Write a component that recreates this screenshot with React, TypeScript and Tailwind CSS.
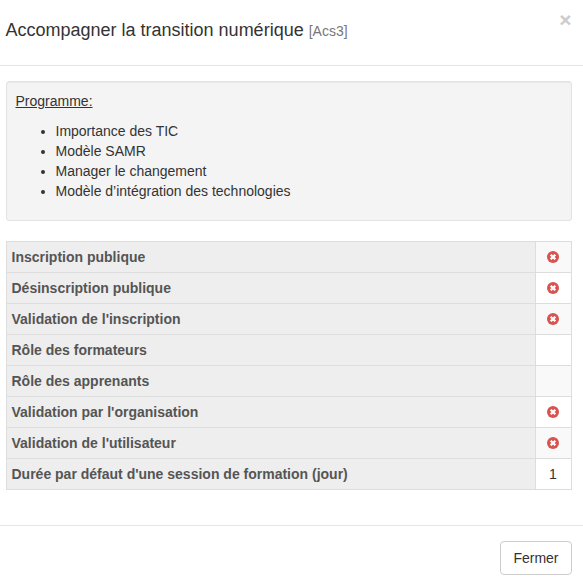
const rows: { label: string; value: 'no' | '' | '1' }[] = [
  { label: 'Inscription publique', value: 'no' },
  { label: 'Désinscription publique', value: 'no' },
  { label: "Validation de l'inscription", value: 'no' },
  { label: 'Rôle des formateurs', value: '' },
  { label: 'Rôle des apprenants', value: '' },
  { label: "Validation par l'organisation", value: 'no' },
  { label: "Validation de l'utilisateur", value: 'no' },
  { label: "Durée par défaut d'une session de formation (jour)", value: '1' },
];

function NoIcon() {
  return (
    <svg width="12" height="12" viewBox="0 0 12 12" className="block">
      <circle cx="6" cy="6" r="6" fill="#d9534f" />
      <path d="M3.7 3.7 8.3 8.3M8.3 3.7 3.7 8.3" stroke="#fff" strokeWidth="2.3" />
    </svg>
  );
}

export default function App() {
  return (
    <div className="flex h-[583px] w-[583px] flex-col overflow-hidden bg-white font-['Liberation_Sans',sans-serif] text-sm leading-5 text-[#333]">
      <header className="flex h-[66px] shrink-0 justify-between border-b border-[#e5e5e5] pl-[5.5px] pr-[11.5px]">
        <h4 className="pt-[17px] text-[18px] leading-[26px]">
          Accompagner la transition numérique <small className="text-[14px] text-[#777]">[Acs3]</small>
        </h4>
        <button className="h-[21px] pt-[9px] text-[21px] font-bold leading-[21px] text-[#ccc]">×</button>
      </header>
      <main className="shrink-0 pl-[5.5px] pr-[11.5px] pt-[15px]">
        <section className="h-[140px] rounded-[3px] border border-[#e3e3e3] bg-[#f4f4f4] px-[9px] py-[9px] shadow-[inset_0_1px_1px_rgba(0,0,0,0.05)]">
          <p className="mb-[10px] underline">Programme:</p>
          <ul className="list-disc pl-10">
            <li>Importance des TIC</li>
            <li>Modèle SAMR</li>
            <li>Manager le changement</li>
            <li>Modèle d’intégration des technologies</li>
          </ul>
        </section>
        <div className="mt-5 border-t border-l border-[#ddd]">
          {rows.map((row) => (
            <div key={row.label} className="group flex h-[31px] border-b border-[#ddd]">
              <div className="flex-1 border-r border-[#ddd] bg-[#eee] pl-[5px] pt-[5px] font-bold text-[#555]">{row.label}</div>
              <div className="flex w-9 items-center justify-center border-r border-[#ddd] group-odd:bg-[#f9f9f9]">
                {row.value === 'no' ? <NoIcon /> : row.value}
              </div>
            </div>
          ))}
        </div>
      </main>
      <footer className="mt-[35px] flex h-[58px] shrink-0 justify-end border-t border-[#e5e5e5] pr-[11.5px] pt-[15px]">
        <button className="h-[34px] rounded-[4px] border border-[#ccc] bg-white px-3">Fermer</button>
      </footer>
    </div>
  );
}
